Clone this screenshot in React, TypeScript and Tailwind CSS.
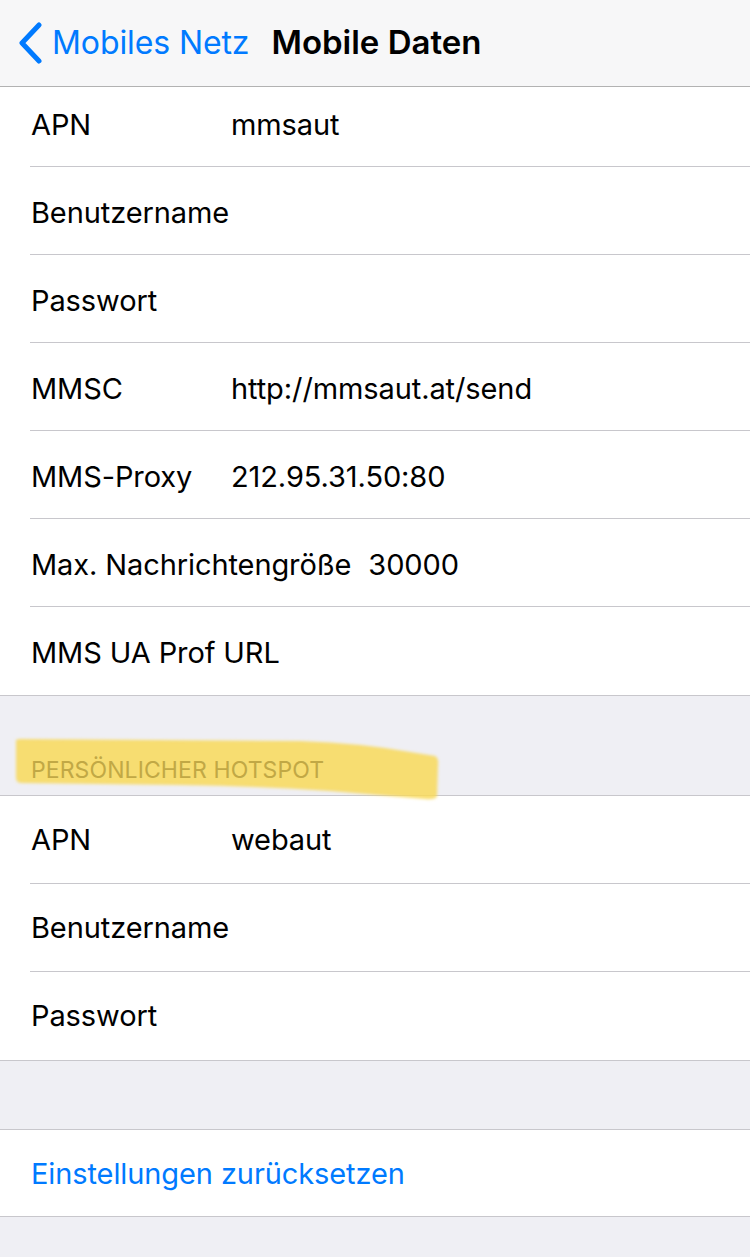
import React from 'react';

const font = { fontFamily: 'Inter, "Noto Sans", sans-serif' };

type Row = { label: string; value?: string; tight?: boolean };

const mmsRows: Row[] = [
    { label: 'APN', value: 'mmsaut' },
    { label: 'Benutzername' },
    { label: 'Passwort' },
    { label: 'MMSC', value: 'http://mmsaut.at/send' },
    { label: 'MMS-Proxy', value: '212.95.31.50:80' },
    { label: 'Max. Nachrichtengröße', value: '30000', tight: true },
    { label: 'MMS UA Prof URL' },
];

const hotspotRows: Row[] = [
    { label: 'APN', value: 'webaut' },
    { label: 'Benutzername' },
    { label: 'Passwort' },
];

function Group({ rows, className = '', rowPad = 'pt-[4px]' }: { rows: Row[]; className?: string; rowPad?: string }) {
    return (
        <div className={`bg-white border-y border-[#c8c7cc] pl-[30px] ${className}`}>
            {rows.map((r, i) => (
                <div
                    key={r.label + i}
                    className={`flex items-center h-[88px] ${rowPad} text-[29px] text-black tracking-[-0.1px] ${i < rows.length - 1 ? 'border-b border-[#c8c7cc]' : ''}`}
                >
                    {r.tight ? (
                        <>
                            <span className="pl-px whitespace-nowrap">{r.label}</span>
                            <span className="ml-[17px]">{r.value}</span>
                        </>
                    ) : (
                        <>
                            <span className="pl-px w-[201px] shrink-0 whitespace-nowrap">{r.label}</span>
                            {r.value && <span>{r.value}</span>}
                        </>
                    )}
                </div>
            ))}
        </div>
    );
}

export default function App() {
    return (
        <div className="w-[750px] h-[1257px] bg-[#efeff4] overflow-hidden" style={font}>
            {/* nav bar */}
            <div className="relative z-10 h-[87px] bg-[#f7f7f8] border-b border-[#b2b2b2] flex items-center">
                <svg width="26" height="42" viewBox="0 0 26 42" className="ml-[17px]">
                    <path d="M22 3 L5 21 L22 39" fill="none" stroke="#007aff" strokeWidth="5" strokeLinecap="round" strokeLinejoin="round" />
                </svg>
                <span className="ml-[9px] text-[32px] text-[#007aff] tracking-[-0.1px]">Mobiles Netz</span>
                <span className="ml-[22px] text-[33px] font-semibold text-black">Mobile Daten</span>
            </div>

            <Group rows={mmsRows} className="-mt-[8px] border-t-0" />

            {/* section header */}
            <div className="relative h-[99px] flex items-end pb-[11px] pl-[31px]">
                {/* highlighter stroke */}
                <svg className="absolute left-0 top-0 pointer-events-none" width="460" height="110" viewBox="0 0 460 110">
                    <defs>
                        <filter id="soft" x="-5%" y="-20%" width="110%" height="140%">
                            <feGaussianBlur stdDeviation="1.6" />
                        </filter>
                    </defs>
                    <path
                        d="M16 46 Q15 43 20 43 L300 45 Q360 47 410 56 L435 60 Q439 62 438 70 L437 100 Q436 104 425 103 L330 95 Q250 90 180 89 L22 87 Q16 87 16 82 Z"
                        fill="#f8d95a"
                        fillOpacity="0.85"
                        filter="url(#soft)"
                    />
                </svg>
                <span className="relative text-[23px] leading-[28px] text-[#c1a845] tracking-[0.1px]">PERSÖNLICHER HOTSPOT</span>
            </div>

            <Group rows={hotspotRows} rowPad="pt-0" />

            <div className="h-[68px]" />

            <div className="bg-white border-y border-[#c8c7cc] h-[88px] flex items-center pt-[2px] pl-[31px]">
                <span className="text-[29px] text-[#007aff] tracking-[-0.1px]">Einstellungen zurücksetzen</span>
            </div>
        </div>
    );
}
